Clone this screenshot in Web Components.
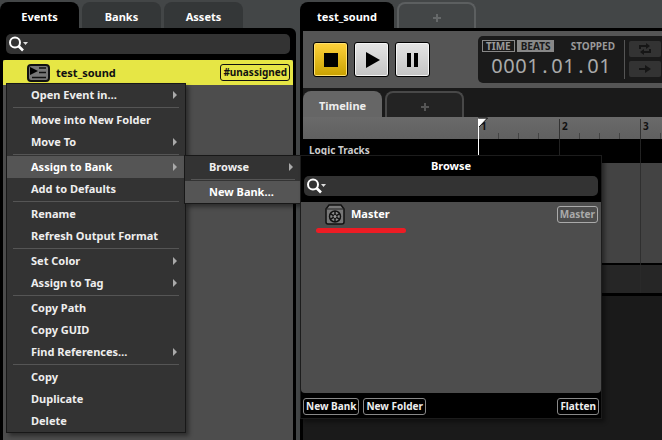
<!DOCTYPE html>
<html lang="en">
<head>
<meta charset="utf-8">
<title>Event editor</title>
<style>
  html, body { height: 100%; margin: 0; }
  body { background: #434647; color: #fff; font: bold 11px/16px "Noto Sans", "Open Sans", sans-serif; overflow: hidden; }
</style>
</head>
<body>
<studio-app></studio-app>
<script>
const define = (name, html, setup) => {
  const template = document.createElement('template');
  template.innerHTML = html;
  customElements.define(name, class extends HTMLElement {
    constructor() {
      super();
      this.attachShadow({ mode: 'open' }).append(template.content.cloneNode(true));
    }
    connectedCallback() { if (setup) setup(this, this.shadowRoot); }
  });
};

define('studio-tab', `
<style>
  :host { display: block; flex: 0 0 79px; height: 26px; }
  :host([wide]) { flex-basis: 94px; }
  button { all: unset; box-sizing: border-box; display: block; width: 100%; height: 100%; padding-top: 3px;
    border-radius: 8px 8px 0 0; background: #343738; color: #fff; text-align: center; }
  :host([selected]) button { background: #000; }
  :host([panel]) button { background: #666; color: #eee; }
  :host([add]) button { background: none; border: 2px solid #5c5f60; border-bottom: 0; color: #66696a; }
  :host([add][dim]) button { background: #232323; border-color: #484848; color: #555; }
  svg { display: block; margin: 4px auto; }
</style>
<button type="button"><slot></slot></button>`, (el, root) => {
  if (el.hasAttribute('add')) {
    const b = root.querySelector('button');
    b.setAttribute('aria-label', 'Add tab');
    b.innerHTML = '<svg width="8" height="8"><path d="M4 0v8M0 4h8" stroke="currentColor" stroke-width="2"/></svg>';
  }
});

define('studio-search', `
<style>
  :host { display: block; }
  label { display: flex; align-items: center; height: 20px; border-radius: 5px; background: #333; }
  svg { flex: none; margin-left: 3px; }
  input { flex: 1; min-width: 0; height: 18px; border: 0; padding: 0 4px; background: none; color: #fff; font: inherit; outline: 0; }
</style>
<label><svg width="20" height="16" viewBox="0 0 20 16"><circle cx="6" cy="6.500" r="5" fill="none" stroke="#fff" stroke-width="2"/><path d="M9.500 10L14 14.500" stroke="#fff" stroke-width="2.600"/><path d="M14 6h5l-2.500 3z" fill="#ddd"/></svg><input type="text" aria-label="Search"></label>`);

define('studio-chip', `
<style>
  :host { display: block; }
  button { all: unset; box-sizing: border-box; display: block; height: 17px; padding: 0 2px; border: 1px solid currentColor; border-radius: 3px;
    font-size: 10px; line-height: 15px; white-space: nowrap; }
  :host([action]) button { border-color: #888; color: #eee; }
</style>
<button type="button"><slot></slot></button>`);

define('studio-menu', `
<style>
  :host { display: block; box-sizing: border-box; border: 1px solid #181818; background: #333; box-shadow: 3px 3px 4px rgba(0,0,0,.4); }
</style>
<div role="menu"><slot></slot></div>`);

define('menu-item', `
<style>
  :host { display: block; }
  button { all: unset; box-sizing: border-box; display: flex; align-items: center; justify-content: space-between; width: 100%; height: 22px; padding: 0 8px 0 24px; color: #eee; white-space: nowrap; }
  :host([active]) button { background: #555; color: #fff; }
  svg { display: none; }
  :host([sub]) svg { display: block; }
</style>
<button type="button" role="menuitem"><slot></slot><svg width="4" height="8"><path d="M0 0l4 4-4 4z" fill="#aaa"/></svg></button>`);

define('menu-line', `
<style>
  :host { display: block; height: 1px; margin: 1px 6px; background: #555; }
</style>`);

define('transport-button', `
<style>
  :host { display: block; }
  button { box-sizing: border-box; display: grid; place-items: center; width: 35px; height: 35px; padding: 0; border: 1px solid #000; border-radius: 3px;
    background: linear-gradient(#e4e4e4, #c4c4c4); box-shadow: inset 0 0 0 1px #f4f4f4; color: #000; }
  :host([on]) button { background: linear-gradient(#ffd23c, #c9a100); box-shadow: inset 0 0 0 1px #ffe070; }
</style>
<button type="button"><svg width="17" height="17"></svg></button>`, (el, root) => {
  const shapes = { stop: 'M2 2h14v14H2z', play: 'M3 1l14 8L3 17z', pause: 'M3 2h4v14H3zM10 2h4v14h-4z' };
  const kind = el.getAttribute('kind');
  root.querySelector('button').setAttribute('aria-label', kind);
  root.querySelector('svg').innerHTML = '<path d="' + shapes[kind] + '"/>';
});

define('time-display', `
<style>
  :host { display: flex; box-sizing: border-box; height: 47px; padding: 4px; border-radius: 5px; background: #1a1a1a; color: #999; }
  .readout { width: 142px; border-right: 1px solid #555; }
  .modes { display: flex; align-items: center; gap: 2px; font-size: 10px; line-height: 12px; }
  .modes button { all: unset; box-sizing: border-box; height: 12px; padding: 0 3px; border: 1px solid #888; line-height: 11px; }
  .modes button.on { background: #888; color: #1a1a1a; }
  .state { margin-left: auto; margin-right: 9px; }
  .clock { display: flex; padding-left: 9px; font: 20px/28px "Noto Sans", sans-serif; color: #aaa; }
  .clock span { width: 12px; text-align: center; }
  .side { display: grid; gap: 4px; align-content: start; padding: 1px 0 0 4px; }
  .side button { display: grid; place-items: center; width: 32px; height: 16px; border: 0; border-radius: 2px; padding: 0; background: #333; color: #161616; }
</style>
<div class="readout">
  <div class="modes"><button type="button">TIME</button><button type="button" class="on">BEATS</button><span class="state">STOPPED</span></div>
  <div class="clock"></div>
</div>
<div class="side">
  <button type="button" aria-label="Loop"><svg width="12" height="12"><path d="M1 6V3h7M11 6v3H4" fill="none" stroke="currentColor" stroke-width="2"/><path d="M7 0l4 3-4 3zM5 6L1 9l4 3z" fill="currentColor"/></svg></button>
  <button type="button" aria-label="Follow"><svg width="12" height="8"><path d="M0 3h6V0l6 4-6 4V5H0z" fill="currentColor"/></svg></button>
</div>`, (el, root) => {
  root.querySelector('.clock').innerHTML = [...el.getAttribute('value')].map(c => '<span>' + c + '</span>').join('');
});

define('event-row', `
<style>
  :host { display: flex; align-items: center; height: 25px; padding: 0 3px 0 24px; border-radius: 2px 2px 0 0; background: #e6e645; color: #111; }
  .name { flex: 1; margin-left: 6px; }
</style>
<svg width="23" height="18" viewBox="0 0 23 18"><rect x="1" y="1" width="21" height="16" rx="3" fill="#777" stroke="#111" stroke-width="2"/><path d="M3 3l8 4-8 4z"/><path d="M12 4h7M12 8.500h7M5 13.500h14" stroke="#111" stroke-width="1.500"/></svg>
<span class="name"><slot></slot></span><slot name="tag"></slot>`);

define('event-browser', `
<style>
  :host { display: flex; flex-direction: column; flex: 0 0 296px; }
  nav { display: flex; gap: 3px; padding-top: 2px; }
  .panel { flex: 1; display: flex; flex-direction: column; box-sizing: border-box; padding: 6px 3px 0; border-radius: 0 6px 0 0; background: #000; }
  studio-search { margin: 0 3px 6px; }
  .list { flex: 1; background: #4d4d4d; }
</style>
<nav><studio-tab selected>Events</studio-tab><studio-tab>Banks</studio-tab><studio-tab>Assets</studio-tab></nav>
<div class="panel">
  <studio-search></studio-search>
  <div class="list"><event-row>test_sound<studio-chip slot="tag">#unassigned</studio-chip></event-row></div>
</div>`);

define('time-ruler', `
<style>
  :host { display: block; height: 22px; padding-left: 175px; background: linear-gradient(#6a6a6a, #606060); overflow: hidden; }
  .bars { display: flex; }
  .bar { flex: 0 0 81px; box-sizing: border-box; height: 20px; margin-top: 2px; padding-left: 2px; border-left: 1px solid #333; font-size: 10px; line-height: 15px; color: #111;
    background: repeating-linear-gradient(90deg, transparent 0 19px, #444 19px 20px) 0 100% / 79px 6px no-repeat; }
</style>
<div class="bars"><div class="bar">1</div><div class="bar">2</div><div class="bar">3</div></div>`);

define('event-editor', `
<style>
  :host { display: flex; flex-direction: column; flex: 1; min-width: 0; }
  nav { display: flex; gap: 3px; padding-top: 2px; }
  .body { flex: 1; display: flex; flex-direction: column; padding: 3px 0 0 3px; background: #000; }
  .bar { display: flex; align-items: center; height: 57px; padding-left: 10px; background: #555; gap: 6px; overflow: hidden; }
  time-display { flex: 1 0 196px; margin-left: 42px; }
  .inner { background: #1a1a1a; padding-top: 3px; }
  .tracks { position: relative; }
  .tracks::after { content: ""; position: absolute; inset: 0 0 3px 175px; background: repeating-linear-gradient(90deg, #2a2a2a 0 1px, transparent 1px 81px); opacity: .8; }
  .logic { height: 24px; padding-left: 6px; font-size: 10px; line-height: 23px; color: #ccc; background: #000; }
  .audio { height: 100px; background: #434343; border-bottom: 2px solid #000; }
  .master { height: 28px; background: #262626; border-bottom: 3px solid #000; }
  .rest { flex: 1; background: #1a1a1a; }
  .head { position: absolute; z-index: 1; left: 175px; top: -22px; }
</style>
<nav><studio-tab wide selected>test_sound</studio-tab><studio-tab add></studio-tab></nav>
<div class="body">
  <div class="bar"><transport-button kind="stop" on></transport-button><transport-button kind="play"></transport-button><transport-button kind="pause"></transport-button><time-display value="0001.01.01"></time-display></div>
  <nav class="inner"><studio-tab panel>Timeline</studio-tab><studio-tab add dim></studio-tab></nav>
  <time-ruler></time-ruler>
  <div class="tracks">
    <svg class="head" width="12" height="146"><path d="M.5 1v145" stroke="#fff"/><path d="M0 1.500h9L1 10z" fill="#fff"/><path d="M0 1h9.500L1 10" fill="none" stroke="#111"/></svg>
    <div class="logic">Logic Tracks</div><div class="audio"></div><div class="master"></div>
  </div>
  <div class="rest"></div>
</div>`);

define('bank-popup', `
<style>
  :host { display: flex; flex-direction: column; box-sizing: border-box; border: 1px solid #1c1c1c; background: #000; box-shadow: 3px 3px 4px rgba(0,0,0,.4); }
  header { height: 20px; line-height: 19px; text-align: center; }
  studio-search { margin: 0 3px 6px; }
  .list { flex: 1; background: #4d4d4d; border-radius: 0 0 4px 4px; }
  .row { display: flex; align-items: center; padding: 1px 3px 0 24px; height: 22px; }
  .name { flex: 1; margin-left: 6px; }
  .row studio-chip { color: #aaa; }
  .mark { width: 90px; height: 5px; margin: 3px 0 0 15px; border-radius: 3px; background: #ed1c24; }
  footer { display: flex; gap: 4px; padding: 5px 2px 3px; }
  footer :last-child { margin-left: auto; }
</style>
<header>Browse</header>
<studio-search></studio-search>
<div class="list">
  <div class="row">
    <svg width="20" height="21" viewBox="0 0 20 21"><path d="M1 5l3-4h12l3 4v13q0 2-2 2H3q-2 0-2-2z" fill="#777" stroke="#111" stroke-width="1.500"/><path d="M1 5h18" stroke="#222"/><circle cx="10" cy="12.500" r="5.500" fill="#888" stroke="#111" stroke-width="1.500"/><path d="M10 7v11M5.200 9.700l9.600 5.600M5.200 15.300l9.600-5.600" stroke="#111" stroke-width="1.500"/><circle cx="10" cy="12.500" r="2" fill="#999" stroke="#111"/></svg>
    <span class="name">Master</span><studio-chip>Master</studio-chip>
  </div>
  <div class="mark"></div>
</div>
<footer><studio-chip action>New Bank</studio-chip><studio-chip action>New Folder</studio-chip><studio-chip action>Flatten</studio-chip></footer>`);

define('studio-app', `
<style>
  :host { display: flex; gap: 4px; height: 100%; }
  .context, .sub, bank-popup { position: absolute; z-index: 2; }
  .context { left: 6px; top: 83px; width: 180px; }
  .sub { left: 184px; top: 155px; width: 118px; }
  bank-popup { left: 300px; top: 155px; width: 302px; height: 264px; }
</style>
<event-browser></event-browser>
<event-editor></event-editor>
<studio-menu class="context">
  <menu-item sub>Open Event in…</menu-item><menu-line></menu-line>
  <menu-item>Move into New Folder</menu-item><menu-item sub>Move To</menu-item><menu-line></menu-line>
  <menu-item sub active>Assign to Bank</menu-item><menu-item>Add to Defaults</menu-item><menu-line></menu-line>
  <menu-item>Rename</menu-item><menu-item>Refresh Output Format</menu-item><menu-line></menu-line>
  <menu-item sub>Set Color</menu-item><menu-item sub>Assign to Tag</menu-item><menu-line></menu-line>
  <menu-item>Copy Path</menu-item><menu-item>Copy GUID</menu-item><menu-item sub>Find References…</menu-item><menu-line></menu-line>
  <menu-item>Copy</menu-item><menu-item>Duplicate</menu-item><menu-item>Delete</menu-item>
</studio-menu>
<studio-menu class="sub"><menu-item sub>Browse</menu-item><menu-line></menu-line><menu-item active>New Bank…</menu-item></studio-menu>
<bank-popup></bank-popup>`);
</script>
</body>
</html>
